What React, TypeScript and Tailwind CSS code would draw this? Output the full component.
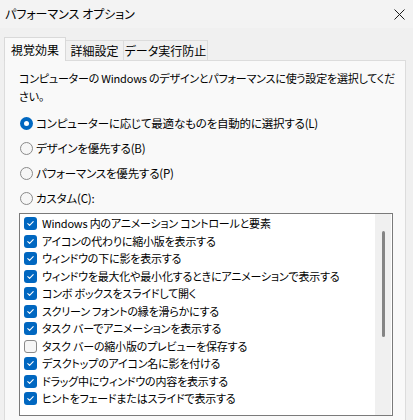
import React from 'react';

const items: Array<{ label: string; checked: boolean }> = [
  { label: 'Windows 内のアニメーション コントロールと要素', checked: true },
  { label: 'アイコンの代わりに縮小版を表示する', checked: true },
  { label: 'ウィンドウの下に影を表示する', checked: true },
  { label: 'ウィンドウを最大化や最小化するときにアニメーションで表示する', checked: true },
  { label: 'コンボ ボックスをスライドして開く', checked: true },
  { label: 'スクリーン フォントの縁を滑らかにする', checked: true },
  { label: 'タスク バーでアニメーションを表示する', checked: true },
  { label: 'タスク バーの縮小版のプレビューを保存する', checked: false },
  { label: 'デスクトップのアイコン名に影を付ける', checked: true },
  { label: 'ドラッグ中にウィンドウの内容を表示する', checked: true },
  { label: 'ヒントをフェードまたはスライドで表示する', checked: true },
];

const radios = [
  { label: 'コンピューターに応じて最適なものを自動的に選択する(L)', selected: true },
  { label: 'デザインを優先する(B)', selected: false },
  { label: 'パフォーマンスを優先する(P)', selected: false },
  { label: 'カスタム(C):', selected: false },
];

function Radio({ selected }: { selected: boolean }) {
  if (selected) {
    return (
      <span className="w-[13px] h-[13px] rounded-full bg-[#0067c0] flex items-center justify-center shrink-0">
        <span className="w-[5px] h-[5px] rounded-full bg-white" />
      </span>
    );
  }
  return <span className="w-[13px] h-[13px] rounded-full border border-[#8a8a8a] bg-[#f6f6f6] shrink-0" />;
}

function Check({ checked }: { checked: boolean }) {
  if (!checked) {
    return <span className="w-[13px] h-[13px] rounded-[3px] border border-[#8a8a8a] bg-[#f6f6f6] shrink-0" />;
  }
  return (
    <span className="w-[13px] h-[13px] rounded-[3px] bg-[#0067c0] flex items-center justify-center shrink-0">
      <svg width="9" height="9" viewBox="0 0 9 9" fill="none">
        <path d="M1.8 4.6 L3.6 6.3 L7.2 2.6" stroke="white" strokeWidth="1.1" strokeLinecap="round" strokeLinejoin="round" />
      </svg>
    </span>
  );
}

export default function App() {
  return (
    <div className="w-[413px] h-[420px] bg-[#f0f0f0] overflow-hidden text-[12px] text-black font-['Noto_Sans_CJK_JP',sans-serif] [font-feature-settings:'palt']">
      {/* title bar */}
      <div className="h-[28px] bg-[#f3f3f3] flex items-center justify-between pl-[5px] pr-[8px]">
        <span className="leading-none">パフォーマンス オプション</span>
        <svg width="11" height="11" viewBox="0 0 11 11" fill="none">
          <path d="M0.5 0.5 L10.5 10.5 M10.5 0.5 L0.5 10.5" stroke="#1a1a1a" strokeWidth="1" />
        </svg>
      </div>

      {/* tabs */}
      <div className="flex items-end pl-[4px] pt-[9px]">
        <div className="h-[24px] w-[62px] bg-[#f9f9f9] border border-b-0 border-[#d9d9d9] flex items-center justify-center relative z-10 -mb-px">
          視覚効果
        </div>
        <div className="h-[20px] w-[58px] border border-l-0 border-b-0 border-[#dcdcdc] bg-[#f0f0f0] flex items-center justify-center">
          詳細設定
        </div>
        <div className="h-[20px] w-[84px] border border-l-0 border-b-0 border-[#dcdcdc] bg-[#f0f0f0] flex items-center justify-center">
          データ実行防止
        </div>
      </div>

      {/* panel */}
      <div className="ml-[4px] w-[402px] h-[400px] bg-[#f9f9f9] border border-[#dcdcdc] pl-[14px] pr-[12px] pt-[8px] text-[11px] tracking-[-0.2px]">
        <p className="leading-[18px] whitespace-nowrap">
          コンピューターの Windows のデザインとパフォーマンスに使う設定を選択してくだ
          <br />
          さい。
        </p>

        <div className="mt-[6px] flex flex-col text-[11.5px]">
          {radios.map((r) => (
            <div key={r.label} className="h-[25px] flex items-center gap-[3px] pl-[1px]">
              <Radio selected={r.selected} />
              <span className="leading-none">{r.label}</span>
            </div>
          ))}
        </div>

        <div className="mt-[2px] w-[374px] h-[203px] bg-white border border-[#7a7a7a] flex overflow-hidden">
          <div className="flex-1 pt-px flex flex-col">
            {items.map((it) => (
              <div key={it.label} className="h-[17.5px] flex items-center gap-[5px] pl-[4px] whitespace-nowrap">
                <Check checked={it.checked} />
                <span className="leading-none">{it.label}</span>
              </div>
            ))}
          </div>
          <div className="w-[16px] mr-px bg-[#f0f0f0] flex justify-center">
            <div className="mt-[17px] w-[3px] h-[106px] bg-[#858585] rounded-full" />
          </div>
        </div>
      </div>
    </div>
  );
}
